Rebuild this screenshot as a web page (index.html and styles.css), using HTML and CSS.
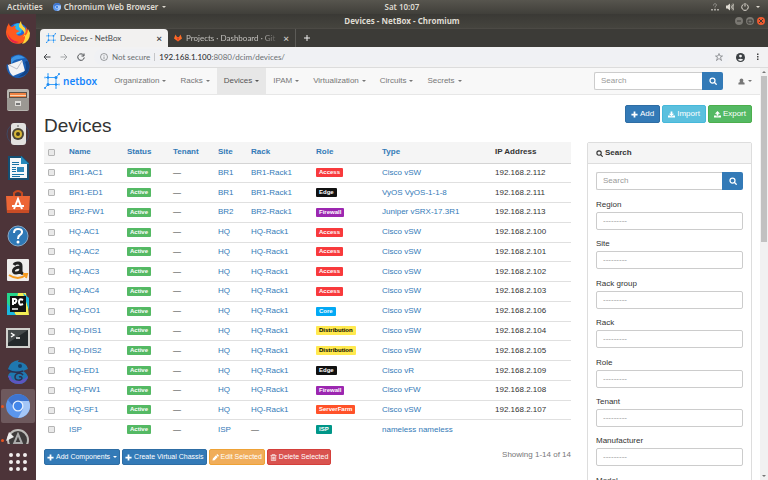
FILE: index.html
```
<!DOCTYPE html>
<html lang="en">
<head>
    <meta charset="UTF-8">
    <meta name="viewport" content="width=device-width, initial-scale=1.0">
    <title>Devices - NetBox</title>
    <link rel="stylesheet" href="styles.css">
</head>
<body>
    <!-- shared icons -->
    <svg class="sprite" aria-hidden="true">
        <symbol id="i-netbox" viewBox="0 0 16 16">
            <g fill="none" stroke="#3ea2f7" stroke-width="1"><path d="M4 4.500H12V11.500H4V1M12 4.500L15 1M4 11.500L1 15M12 11.500V15.500M4 4.500H1M12 11.500H15"/></g>
            <g fill="#1c8cf5"><circle cx="4" cy="4.500" r="1.200"/><circle cx="12" cy="4.500" r="1.500"/><circle cx="4" cy="11.500" r="1.500"/><circle cx="12" cy="11.500" r="1.200"/><circle cx="15" cy="1" r="1"/><circle cx="1" cy="15" r="1"/></g>
            <g fill="#7cc0fa"><circle cx="1" cy="4.500" r="1"/><circle cx="4" cy="1" r="1"/><circle cx="15" cy="11.500" r="1"/><circle cx="12" cy="15" r="1"/></g>
        </symbol>
        <symbol id="i-plus" viewBox="0 0 16 16"><path fill="currentColor" d="M6 1h4v5h5v4h-5v5H6v-5H1V6h5z"/></symbol>
        <symbol id="i-search" viewBox="0 0 16 16"><g fill="none" stroke="currentColor" stroke-width="2.500"><circle cx="7" cy="7" r="5"/><path stroke-linecap="round" d="M11 11l3.500 3.500"/></g></symbol>
        <symbol id="i-import" viewBox="0 0 16 16"><path fill="currentColor" d="M6 1h4v5h4l-6 6-6-6h4zM0 10h4l2 2h4l2-2h4v5H0z"/></symbol>
        <symbol id="i-export" viewBox="0 0 16 16"><path fill="currentColor" d="M8 0l6 6h-4v5H6V6H2zM0 10h5v2h6v-2h5v5H0z"/></symbol>
        <symbol id="i-pencil" viewBox="0 0 16 16"><path fill="currentColor" d="M1 15l1-5 7-7 4 4-7 7zM10 2l2-2 4 4-2 2z"/></symbol>
        <symbol id="i-trash" viewBox="0 0 16 16"><path fill="none" stroke="currentColor" stroke-width="1.500" d="M1 3.500h14M5 3V1h6v2M3 4v11h10V4M6 6v7M8 6v7M10 6v7"/></symbol>
        <symbol id="i-user" viewBox="0 0 16 16"><path fill="currentColor" d="M8 1c5 0 5 7 3 8l4 2v4H1v-4l4-2C3 8 3 1 8 1z"/></symbol>
        <symbol id="i-chromium" viewBox="0 0 24 24">
            <circle cx="12" cy="12" r="12" fill="#5b96ec"/><path fill="#a4c6f6" d="M12 12l5 3-5 9A12 12 0 0 0 23 7H12z"/><path fill="#3d74cf" d="M2 6a12 12 0 0 1 21 1H12a5 5 0 0 0-5 5z"/>
            <circle cx="12" cy="12" r="5.500" fill="#e6f0fd"/><circle cx="12" cy="12" r="4.200" fill="#4387ea"/>
        </symbol>
    </svg>

    <div class="topbar">
        <span class="activities">Activities</span>
        <span class="app-menu"><svg><use href="#i-chromium"/></svg>Chromium Web Browser<i class="caret"></i></span>
        <span class="clock">Sat 10:07</span>
        <span class="tray">
            <svg viewBox="0 0 16 16"><path fill="none" stroke="#aaa8a2" stroke-width="1.500" d="M5 5c0-5 6-4 6-1 0 2-3 2-3 4M8 9v2"/><path fill="#aaa8a2" d="M0 12h4v3H0zM6 12h4v3H6zM12 12h4v3h-4z"/></svg>
            <svg viewBox="0 0 16 16"><path fill="#dfdbd2" d="M0 5h3l5-4v14l-5-4H0z"/><path fill="none" stroke="#dfdbd2" stroke-width="1.500" d="M10 5q2 3 0 6M12 3q4 5 0 10M14 1q5 7 0 14"/></svg>
            <svg viewBox="0 0 16 16"><path fill="none" stroke="#dfdbd2" stroke-width="2" d="M5 2.500a6.500 6.500 0 1 0 6 0M8 0v7"/></svg>
            <i class="caret"></i>
        </span>
    </div>

    <div class="desktop">
        <nav class="dock">
            <ul>
                <li><svg viewBox="0 0 24 24"><circle cx="12" cy="13" r="10" fill="#2367d8"/><path fill="#25b9f4" d="M8 5q5-4 9 1l-2 7-5 2z"/><path fill="#ff5a1f" d="M3 3q0 3 3 4 3-2 4-1-2 2 1 4l3 1-4 2q1 4 6 2 5-3 4-8 4 5 1 11c-6 11-21 5-21-6Q0 7 3 3z"/><path fill="#ffd43a" d="M15 1q0 4 4 7 2 4-2 9 5-2 5-8l2 4q0 9-8 11 5-6 2-12-3-4-5-5 0-4 2-6z"/><path fill="#e8234a" d="M1 12q3 9 12 10-9 4-12-10z"/></svg></li>
                <li><svg viewBox="0 0 24 24"><path fill="#1b5fb4" d="M5 3q9-6 16 2c6 9 0 19-9 19C4 24-1 16 1 10q2 2 4 1z"/><path fill="#3d94e4" d="M5 5q7-7 14-1l-6 1q-6 0-8 6z"/><path fill="#f2f2f4" d="M2 11l14-5 3 11-12 5Q3 19 2 11z"/><path fill="none" stroke="#b9bdc9" d="M3 11l8 4 5-8"/><path fill="#134487" d="M19 8q4 8-7 15 13-1 11-13-1-5-4-2z"/></svg></li>
                <li><svg viewBox="0 0 24 24"><rect x="1" y="1" width="22" height="22" rx="2" fill="#b8b6b1"/><path fill="#5a5148" d="M3 4h18v6H3z"/><path fill="#f08344" d="M4 5h16v4H4z"/><path fill="#f8d5b2" d="M4 7h16v1H4z"/><path fill="#9b9893" d="M1 10h22v12H1z"/><rect x="9" y="13" width="6" height="5" fill="#dedcd8"/><path fill="#777" d="M10 15h4v2h-4z"/></svg></li>
                <li><svg viewBox="0 0 24 24"><circle cx="12" cy="12" r="11" fill="none" stroke="#3f4963"/><rect x="5" y="1" width="15" height="22" rx="3" fill="#e2e1df"/><circle cx="12" cy="12" r="6" fill="#4b4637"/><circle cx="12" cy="12" r="4" fill="#d6b638"/><circle cx="12" cy="12" r="2" fill="#443b1b"/><circle cx="12" cy="4" r="1" fill="#888"/></svg></li>
                <li><svg viewBox="0 0 24 24"><path fill="#144f73" d="M2 0h14l7 7v17H2z"/><path fill="#f5f8fa" d="M4 2h11l6 6v14H4z"/><path fill="#2289bc" d="M15 0v8h8z"/><path stroke="#1773a7" d="M6 6.500h7M6 8.500h7M6 11.500h4M6 13.500h4M6 15.500h4M6 18.500h12M6 20.500h8"/><path fill="#318bbd" d="M11 11h7v5h-7z"/></svg></li>
                <li><svg viewBox="0 0 24 24"><path fill="none" stroke="#c64a20" stroke-width="2" d="M8 7V3q4-4 8 0v4"/><path fill="#ed6636" d="M0 6h24l-1 17H1z"/><path fill="#c94c25" d="M1 20h22v3H1z"/><path fill="none" stroke="#fff" stroke-width="2" d="M8 19l4-10 4 10M6 16h12"/></svg></li>
                <li><svg viewBox="0 0 24 24"><circle cx="12" cy="12" r="10" fill="#2e78b6" stroke="#86a9c8"/><path fill="none" stroke="#fff" stroke-width="2" d="M8 9q0-4 4-4c5 0 5 4 2 6q-2 1-2 4"/><circle cx="12" cy="18" r="1.500" fill="#fff"/></svg></li>
                <li><svg viewBox="0 0 24 24"><rect x="1" y="1" width="22" height="22" rx="1" fill="#eeedec"/><path fill="none" stroke="#222" stroke-width="3" d="M8 7q1-2 4-2 3 0 3 3v5q0 2 2 3M15 9c-9 0-9 6-5 6q5 0 5-5"/><path fill="none" stroke="#f49a20" stroke-width="2" d="M3 17q9 6 17 0M17 16h4l-1 4"/></svg></li>
                <li><svg viewBox="0 0 24 24"><path fill="#26d68d" d="M1 1h13L1 23z"/><path fill="#f3ee55" d="M12 1h8l3 22H8z"/><path fill="#19b9df" d="M17 1l6 5v12zM1 11l9 12H1z"/><path fill="#111" d="M4 4h16v16H4z"/><path fill="none" stroke="#fff" stroke-width="2" d="M7 13V7h2q3 1 0 4H7M17 8q-4-2-4 2t4 2"/><path stroke="#fff" stroke-width="1.500" d="M6 17h6"/></svg></li>
                <li><svg viewBox="0 0 24 24"><rect x="0" y="2" width="24" height="20" fill="#d0d0cc"/><rect x="2" y="4" width="20" height="16" fill="#24292b"/><path fill="#454a4b" d="M2 4h20L2 17z"/><path fill="none" stroke="#fff" stroke-width="1.500" d="M5 7l3 2-3 2M10 12h4"/></svg></li>
                <li><svg viewBox="0 0 24 24"><path fill="#1f78b0" d="M2 9Q4 1 13 0q-2 2 0 2 8 1 9 7l-5 2q5 3 5 7-3 6-9 6Q4 24 2 16q1-4 5-4Q3 12 2 9z"/><path fill="#5e55c0" d="M2 16q2 8 11 8 8-1 9-8-3 3-7 4Q5 22 5 16z"/><path fill="none" stroke="#2c3050" stroke-width="1.500" d="M17 15c-2-3-8-2-8 2s7 4 7 1q-1-2-3-1M2 10q7 4 15 1"/><circle cx="14" cy="6" r="2" fill="#173f66"/></svg></li>
                <li class="active"><svg><use href="#i-chromium"/></svg></li>
                <li class="open"><svg viewBox="0 0 24 24"><circle cx="12" cy="12" r="10" fill="#3e3b3b" stroke="#bdbbb8" stroke-width="2"/><path fill="#eee" d="M0 13l3-9 5 5z"/><path fill="none" stroke="#aaa" stroke-width="2" d="M7 18l5-12 5 12M8 15h8"/></svg></li>
            </ul>
            <button class="show-apps" aria-label="Show Applications"><i></i><i></i><i></i><i></i><i></i><i></i><i></i><i></i><i></i></button>
        </nav>

        <div class="window">
            <div class="titlebar">
                <span>Devices - NetBox - Chromium</span>
                <div class="window-buttons">
                    <button aria-label="Minimize"><svg viewBox="0 0 8 8"><path d="M2 4h4"/></svg></button>
                    <button aria-label="Maximize"><svg viewBox="0 0 8 8"><path d="M2 3h4v3H2z"/></svg></button>
                    <button class="close" aria-label="Close"><svg viewBox="0 0 8 8"><path d="M2 2l4 4M6 2l-4 4"/></svg></button>
                </div>
            </div>
            <div class="tabs">
                <div class="tab current">
                    <svg><use href="#i-netbox"/></svg><span>Devices - NetBox</span><b>×</b>
                </div>
                <div class="tab">
                    <svg viewBox="0 0 16 16"><path fill="#fc6d26" d="M0 9l3-8 3 5h4l3-5 3 8-8 6z"/><path fill="#e24329" d="M5 7h6l-3 8z"/></svg><span class="fade">Projects · Dashboard · Git</span><b>×</b>
                </div>
                <button class="new-tab" aria-label="New tab"><svg viewBox="0 0 8 8"><path stroke="#eee" d="M1 4h6M4 1v6"/></svg></button>
            </div>
            <div class="toolbar">
                <svg viewBox="0 0 16 16"><path d="M15 8H2M8 2L2 8l6 6"/></svg>
                <svg class="disabled" viewBox="0 0 16 16"><path d="M1 8h13M8 2l6 6-6 6"/></svg>
                <svg viewBox="0 0 16 16"><path d="M13 4a6.500 6.500 0 1 0 1.500 5M14 1v5H9"/></svg>
                <div class="address">
                    <svg viewBox="0 0 16 16"><circle cx="8" cy="8" r="7"/><path d="M8 7v5M8 4v1.500"/></svg>
                    <span class="insecure">Not secure</span>
                    <span class="url"><strong>192.168.1.100</strong>:8080/dcim/devices/</span>
                    <svg class="star" viewBox="0 0 16 16"><path d="M8 1l2 5h5l-4 3 2 6-5-4-5 4 2-6-4-3h5z"/></svg>
                </div>
                <svg class="profile" viewBox="0 0 16 16"><circle cx="8" cy="8" r="8" fill="#3c4043" stroke="none"/><circle cx="8" cy="5.500" r="2.500" fill="#f2f2f3" stroke="none"/><path fill="#f2f2f3" stroke="none" d="M3 12q5-4 10 0-5 4-10 0z"/></svg>
                <svg class="dots" viewBox="0 0 4 16"><path fill="#444" stroke="none" d="M0 1h3v3H0zM0 6h3v3H0zM0 11h3v3H0z"/></svg>
            </div>

            <div class="viewport">
                <div class="page">
                    <header class="navbar">
                        <a class="brand" href="#"><svg><use href="#i-netbox"/></svg>netbox</a>
                        <a href="#">Organization<i class="caret"></i></a>
                        <a href="#">Racks<i class="caret"></i></a>
                        <a class="active" href="#">Devices<i class="caret"></i></a>
                        <a href="#">IPAM<i class="caret"></i></a>
                        <a href="#">Virtualization<i class="caret"></i></a>
                        <a href="#">Circuits<i class="caret"></i></a>
                        <a href="#">Secrets<i class="caret"></i></a>
                        <form class="search-group nav-search">
                            <input type="text" placeholder="Search" aria-label="Search NetBox">
                            <button type="button" aria-label="Search"><svg><use href="#i-search"/></svg></button>
                        </form>
                        <a class="user" href="#" aria-label="User"><svg><use href="#i-user"/></svg><i class="caret"></i></a>
                    </header>

                    <div class="heading">
                        <h1>Devices</h1>
                        <div class="actions">
                            <button class="btn primary"><svg><use href="#i-plus"/></svg>Add</button>
                            <button class="btn info"><svg><use href="#i-import"/></svg>Import</button>
                            <button class="btn success"><svg><use href="#i-export"/></svg>Export</button>
                        </div>
                    </div>

                    <div class="row">
                        <main>
                            <table>
                                <colgroup>
                                    <col class="c-check"><col class="c-name"><col class="c-status"><col class="c-tenant"><col class="c-site"><col class="c-rack"><col class="c-role"><col class="c-type"><col class="c-ip">
                                </colgroup>
                                <thead>
                                    <tr>
                                        <th><input type="checkbox" aria-label="Select all"></th>
                                        <th><a href="#">Name</a></th>
                                        <th><a href="#">Status</a></th>
                                        <th><a href="#">Tenant</a></th>
                                        <th><a href="#">Site</a></th>
                                        <th><a href="#">Rack</a></th>
                                        <th><a href="#">Role</a></th>
                                        <th><a href="#">Type</a></th>
                                        <th>IP Address</th>
                                    </tr>
                                </thead>
                                <tbody id="devices"></tbody>
                            </table>
                            <div class="table-footer">
                                <button class="btn small primary"><svg><use href="#i-plus"/></svg>Add Components<i class="caret"></i></button>
                                <button class="btn small primary"><svg><use href="#i-plus"/></svg>Create Virtual Chassis</button>
                                <button class="btn small warning"><svg><use href="#i-pencil"/></svg>Edit Selected</button>
                                <button class="btn small danger"><svg><use href="#i-trash"/></svg>Delete Selected</button>
                                <span class="count">Showing 1-14 of 14</span>
                            </div>
                        </main>

                        <aside>
                            <div class="panel">
                                <h2><svg><use href="#i-search"/></svg>Search</h2>
                                <div class="panel-body">
                                    <div class="search-group">
                                        <input type="text" placeholder="Search" aria-label="Search devices">
                                        <button type="button" aria-label="Search"><svg><use href="#i-search"/></svg></button>
                                    </div>
                                    <form class="filters" id="filters"></form>
                                </div>
                            </div>
                        </aside>
                    </div>
                </div>
                <div class="scrollbar"><i class="up"></i><div class="thumb"></div><i class="down"></i></div>
            </div>
        </div>
    </div>

    <script src="script.js"></script>
</body>
</html>
```
FILE: styles.css
```
* {
    box-sizing: border-box;
}

body {
    margin: 0;
    height: 100vh;
    display: flex;
    flex-direction: column;
    overflow: hidden;
    font-family: "Liberation Sans", Arial, sans-serif;
    font-size: 8px;
    line-height: 10px;
    color: #333;
    background-color: #fff;
}

button, input, select {
    font: inherit;
    margin: 0;
    padding: 0;
    border: none;
    background: none;
}

a {
    color: #337ab7;
    text-decoration: none;
}

svg {
    width: 8px;
    height: 8px;
    flex: none;
}

.sprite {
    display: none;
}

.caret {
    display: inline-block;
    flex: none;
    border: 2px solid transparent;
    border-top-color: currentColor;
    border-bottom: 0;
    margin-left: 3px;
}

/* desktop */
.topbar {
    height: 14px;
    flex: none;
    position: relative;
    display: flex;
    align-items: center;
    padding: 0 8px 0 7px;
    background: linear-gradient(#57554e, #403f3a);
    color: #dfdbd2;
    font-family: "Noto Sans", sans-serif;
    font-weight: 600;
}

.app-menu {
    display: flex;
    align-items: center;
    margin-left: 10px;
}

.app-menu svg {
    margin-right: 3px;
}

.app-menu .caret {
    margin-left: 4px;
}

.clock {
    position: absolute;
    left: 0;
    right: 0;
    text-align: center;
    padding-left: 36px;
}

.tray {
    margin-left: auto;
    display: flex;
    align-items: center;
    gap: 7px;
}

.tray .caret {
    margin: 0;
}

.desktop {
    flex: 1;
    min-height: 0;
    display: flex;
}

.dock {
    width: 36px;
    flex: none;
    display: flex;
    flex-direction: column;
    background-color: #4d3439;
}

.dock ul {
    flex: 1;
    min-height: 0;
    overflow: hidden;
    list-style: none;
    margin: 0;
    padding: 1px;
}

.dock li {
    height: 34px;
    display: flex;
    align-items: center;
    justify-content: center;
    position: relative;
    border-radius: 2px;
}

.dock li svg {
    width: 24px;
    height: 24px;
}

.dock li.active {
    background-color: #6e595d;
}

.dock li.active::before,
.dock li.open::before {
    content: "";
    position: absolute;
    left: 0;
    width: 3px;
    height: 3px;
    border-radius: 50%;
    background-color: #e95420;
}

.show-apps {
    flex: none;
    height: 36px;
    display: grid;
    grid-template-columns: repeat(3, 4px);
    gap: 3px;
    align-content: center;
    justify-content: center;
}

.show-apps i {
    height: 4px;
    border-radius: 50%;
    background-color: #f2efef;
}

/* browser */
.window {
    flex: 1;
    min-width: 0;
    display: flex;
    flex-direction: column;
    background-color: #3c3b37;
}

.titlebar {
    height: 15px;
    flex: none;
    position: relative;
    display: flex;
    align-items: center;
    justify-content: center;
    border-bottom: 1px solid #4c4a45;
    background: linear-gradient(#3a3935, #45443e);
    color: #dfdbd2;
    font-family: "Noto Sans", sans-serif;
    font-weight: bold;
}

.window-buttons {
    position: absolute;
    right: 3px;
    display: flex;
    gap: 3px;
}

.window-buttons button {
    width: 8px;
    height: 8px;
    display: flex;
    border-radius: 50%;
    background-color: #7a7872;
}

.window-buttons .close {
    background-color: #ed5a30;
}

.window-buttons path {
    fill: none;
    stroke: #3c3b37;
}

.tabs {
    height: 18px;
    flex: none;
    display: flex;
    padding-left: 4px;
    color: #c4c2bf;
    font-family: Lato, sans-serif;
}

.tab {
    width: 128px;
    display: flex;
    align-items: center;
    padding: 0 6px;
    white-space: nowrap;
    border-right: 1px solid #5c5b57;
}

.tab.current {
    background-color: #f2f1f0;
    color: #45474a;
    border: none;
    border-radius: 4px 4px 0 0;
}

.tab svg {
    margin-right: 4px;
}

.tab.current svg {
    width: 10px;
    height: 10px;
}

.tab span {
    flex: 1;
    overflow: hidden;
}

.tab .fade {
    -webkit-mask-image: linear-gradient(90deg, #000 80%, transparent);
    mask-image: linear-gradient(90deg, #000 80%, transparent);
}

.tab b {
    font-size: 10px;
    margin-left: 3px;
}

.new-tab {
    padding: 0 7px;
    display: flex;
    align-items: center;
}

.toolbar {
    height: 21px;
    flex: none;
    display: flex;
    align-items: center;
    padding: 0 9px 0 7px;
    gap: 9px;
    background-color: #f2f2f3;
    border-bottom: 1px solid #dcdcdc;
    font-family: Lato, sans-serif;
}

.toolbar svg {
    fill: none;
    stroke: #46494c;
    stroke-width: 2;
}

.toolbar .disabled {
    stroke: #a3a5a7;
}

.address {
    flex: 1;
    height: 16px;
    display: flex;
    align-items: center;
    padding: 0 6px;
    margin-right: -2px;
    border-radius: 8px;
    background-color: #f0f1f4;
    color: #6a6e72;
}

.address svg {
    stroke-width: 1;
}

.insecure {
    margin-left: 4px;
    padding-right: 4px;
    border-right: 1px solid #c4c5c8;
    line-height: 8px;
}

.url {
    margin-left: 4px;
}

.url strong {
    font-weight: 500;
    color: #303336;
}

.address .star {
    margin-left: auto;
}

.toolbar .profile {
    width: 9px;
    height: 9px;
}

.toolbar .dots {
    width: 2px;
    height: 8px;
    margin-left: 3px;
}

.viewport {
    flex: 1;
    min-height: 0;
    display: flex;
    background-color: #fff;
}

.scrollbar {
    width: 8px;
    flex: none;
    display: flex;
    flex-direction: column;
    align-items: center;
    padding: 3px 0;
    background-color: #f1f1f1;
    color: #777;
}

.scrollbar .up,
.scrollbar .down {
    border: 2px solid transparent;
}

.scrollbar .up {
    border-top: 0;
    border-bottom-color: currentColor;
    margin-bottom: 3px;
}

.scrollbar .down {
    border-bottom: 0;
    border-top-color: currentColor;
    margin-top: auto;
}

.thumb {
    width: 6px;
    height: 41%;
    background-color: #c1c1c1;
}

/* netbox */
.page {
    flex: 1;
    min-width: 0;
    overflow: hidden;
}

.navbar {
    height: 27px;
    display: flex;
    align-items: stretch;
    padding: 0 8px;
    background-color: #f8f8f8;
    border-bottom: 1px solid #e7e7e7;
}

.navbar a {
    display: flex;
    align-items: center;
    padding: 0 7px;
    color: #777;
}

.navbar a.active {
    background-color: #e7e7e7;
    color: #555;
}

.navbar .brand {
    padding: 0 10px 0 0;
    color: #1685fc;
    font-family: "Noto Sans", sans-serif;
    font-size: 10px;
    font-weight: 600;
}

.brand svg {
    width: 16px;
    height: 16px;
    margin-right: 3px;
}

.search-group {
    display: flex;
    height: 18px;
}

.search-group input {
    flex: 1;
    min-width: 0;
    padding: 0 6px;
    border: 1px solid #ccc;
    border-right: none;
    border-radius: 2px 0 0 2px;
    background-color: #fff;
}

.search-group input::placeholder {
    color: #999;
}

.search-group button {
    width: 21px;
    display: flex;
    align-items: center;
    justify-content: center;
    border-radius: 0 2px 2px 0;
    background-color: #337ab7;
    color: #fff;
}

.nav-search {
    width: 129px;
    margin: 4px 8px 0 auto;
}

.navbar .user {
    padding-right: 0;
}

.user svg {
    width: 7px;
    height: 7px;
}

.heading {
    display: flex;
    justify-content: space-between;
    align-items: flex-start;
    padding: 10px 8px 0;
    height: 47px;
}

h1 {
    margin: 8px 0 0;
    font-size: 19px;
    line-height: 26px;
    font-weight: normal;
}

.actions {
    display: flex;
    gap: 2px;
}

.btn {
    height: 18px;
    display: flex;
    align-items: center;
    padding: 0 5px;
    border: 1px solid;
    border-radius: 2px;
    color: #fff;
    white-space: nowrap;
}

.btn svg {
    width: 7px;
    height: 7px;
    margin-right: 2px;
}

.btn.small {
    height: 16px;
    padding: 0 2px;
    font-size: 7px;
}

.primary {
    background-color: #337ab7;
    border-color: #2e6da4;
}

.info {
    background-color: #5bc0de;
    border-color: #46b8da;
}

.success {
    background-color: #54b964;
    border-color: #4cae4c;
}

.warning {
    background-color: #f0ad5a;
    border-color: #eea236;
}

.danger {
    background-color: #d9534f;
    border-color: #d43f3a;
}

.row {
    display: grid;
    grid-template-columns: 3fr 1fr;
    align-items: start;
}

main, aside {
    min-width: 0;
    padding: 0 8px;
}

table {
    width: 100%;
    height: 297px;
    table-layout: fixed;
    border-collapse: collapse;
    text-align: left;
}

.c-check { width: 21px; }
.c-name { width: 58px; }
.c-status { width: 46px; }
.c-tenant { width: 45px; }
.c-site { width: 33px; }
.c-rack { width: 65px; }
.c-role { width: 66px; }
.c-type { width: 113px; }
.c-ip { width: 80px; }

th, td {
    padding: 0 4px;
    white-space: nowrap;
    border-top: 1px solid #e0e0e0;
}

th {
    height: 21px;
    border-top: none;
    border-bottom: 1px solid #d4d4d4;
    background-color: #f5f5f5;
}

input[type="checkbox"] {
    appearance: none;
    display: block;
    width: 7px;
    height: 7px;
    border: 1px solid #b5b5b5;
    border-radius: 1px;
    background-color: #e9e9e9;
}

.label {
    display: inline-block;
    padding: 0 3px;
    border-radius: 1px;
    font-size: 6px;
    line-height: 9px;
    font-weight: bold;
    color: #fff;
    vertical-align: middle;
    background-color: #54b964;
}

.access { background-color: #f83a3c; }
.edge { background-color: #111; }
.firewall { background-color: #9c27b0; }
.core { background-color: #03a9f4; }
.distribution { background-color: #ffe94f; color: #000; }
.serverfarm { background-color: #ff5229; }
.isp { background-color: #009688; }

.table-footer {
    display: flex;
    gap: 2px;
    margin-top: 10px;
}

.count {
    margin-left: auto;
    line-height: 12px;
    color: #777;
}

.panel {
    border: 1px solid #ddd;
    border-radius: 2px;
}

.panel h2 {
    display: flex;
    align-items: center;
    gap: 2px;
    height: 21px;
    margin: 0;
    padding: 0 8px;
    border-bottom: 1px solid #ddd;
    background-color: #f5f5f5;
    font-size: 8px;
}

.panel h2 svg {
    width: 7px;
    height: 7px;
}

.panel-body {
    padding: 8px;
}

.filters {
    display: grid;
    grid-auto-rows: 1fr;
    height: 315px;
    margin-top: 9px;
}

.filters label {
    display: block;
    line-height: 11px;
    margin-bottom: 2px;
}

.filters select {
    appearance: none;
    display: block;
    width: 100%;
    height: 18px;
    padding: 0 6px;
    border: 1px solid #ccc;
    border-radius: 2px;
    background-color: #fff;
    color: #999;
}
```
FILE: script.js
```
// name, site, rack, role, type, ip
const devices = [
    ['BR1-AC1', 'BR1', 'BR1-Rack1', 'Access', 'Cisco vSW', '192.168.2.112'],
    ['BR1-ED1', 'BR1', 'BR1-Rack1', 'Edge', 'VyOS VyOS-1-1-8', '192.168.2.111'],
    ['BR2-FW1', 'BR2', 'BR2-Rack1', 'Firewall', 'Juniper vSRX-17.3R1', '192.168.2.113'],
    ['HQ-AC1', 'HQ', 'HQ-Rack1', 'Access', 'Cisco vSW', '192.168.2.100'],
    ['HQ-AC2', 'HQ', 'HQ-Rack1', 'Access', 'Cisco vSW', '192.168.2.101'],
    ['HQ-AC3', 'HQ', 'HQ-Rack1', 'Access', 'Cisco vSW', '192.168.2.102'],
    ['HQ-AC4', 'HQ', 'HQ-Rack1', 'Access', 'Cisco vSW', '192.168.2.103'],
    ['HQ-CO1', 'HQ', 'HQ-Rack1', 'Core', 'Cisco vSW', '192.168.2.106'],
    ['HQ-DIS1', 'HQ', 'HQ-Rack1', 'Distribution', 'Cisco vSW', '192.168.2.104'],
    ['HQ-DIS2', 'HQ', 'HQ-Rack1', 'Distribution', 'Cisco vSW', '192.168.2.105'],
    ['HQ-ED1', 'HQ', 'HQ-Rack1', 'Edge', 'Cisco vR', '192.168.2.109'],
    ['HQ-FW1', 'HQ', 'HQ-Rack1', 'Firewall', 'Cisco vFW', '192.168.2.108'],
    ['HQ-SF1', 'HQ', 'HQ-Rack1', 'ServerFarm', 'Cisco vSW', '192.168.2.107'],
    ['ISP', 'ISP', '', 'ISP', 'nameless nameless', '']
];

const filters = ['Region', 'Site', 'Rack group', 'Rack', 'Role', 'Tenant', 'Manufacturer', 'Model'];

document.getElementById('devices').innerHTML = devices.map(([name, site, rack, role, type, ip]) => `
    <tr>
        <td><input type="checkbox" aria-label="Select ${name}"></td>
        <td><a href="#">${name}</a></td>
        <td><span class="label">Active</span></td>
        <td>—</td>
        <td><a href="#">${site}</a></td>
        <td>${rack ? `<a href="#">${rack}</a>` : '—'}</td>
        <td><span class="label ${role.toLowerCase()}">${role}</span></td>
        <td><a href="#">${type}</a></td>
        <td>${ip}</td>
    </tr>
`).join('');

document.getElementById('filters').innerHTML = filters.map((name, i) => `
    <div>
        <label for="filter${i}">${name}</label>
        <select id="filter${i}"><option>---------</option></select>
    </div>
`).join('');
```
